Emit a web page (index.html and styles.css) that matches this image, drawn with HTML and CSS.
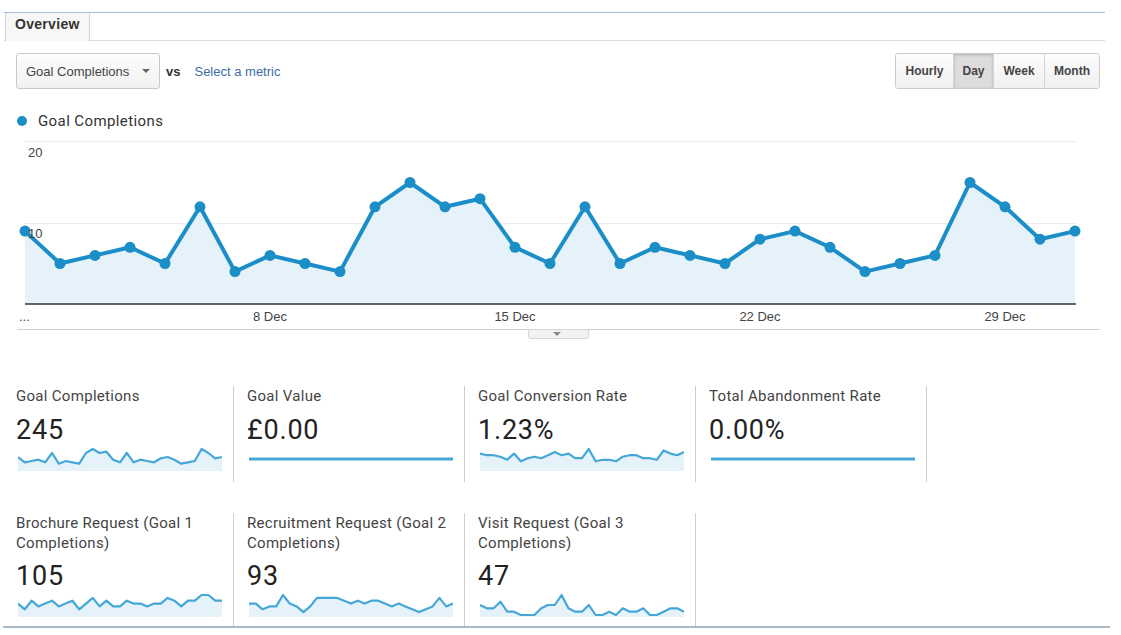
FILE: index.html
```html
<!DOCTYPE html>
<html lang="en">
<head>
    <meta charset="UTF-8">
    <meta name="viewport" content="width=device-width, initial-scale=1.0">
    <title>Goals Overview</title>
    <link rel="stylesheet" href="styles.css">
</head>
<body>
    <div class="tabs">
        <div class="tab">Overview</div>
    </div>

    <div class="toolbar">
        <div class="metric-select">Goal Completions<span class="caret"></span></div>
        <span class="vs">vs</span>
        <a class="select-metric">Select a metric</a>
        <div class="period-group">
            <button class="period hourly">Hourly</button>
            <button class="period day active">Day</button>
            <button class="period week">Week</button>
            <button class="period month">Month</button>
        </div>
    </div>

    <div class="legend"><span class="legend-dot"></span>Goal Completions</div>

    <svg id="main-chart" class="main-chart" width="1121" height="210" viewBox="0 134 1121 210">
        <line class="grid" x1="25" y1="141.5" x2="1076" y2="141.5"></line>
        <line class="grid" x1="25" y1="223.5" x2="1076" y2="223.5"></line>
        <g id="plot"></g>
        <line class="axis" x1="25" y1="304" x2="1076" y2="304"></line>
        <text class="tick" x="28" y="157">20</text>
        <text class="tick" x="28" y="238">10</text>
        <text class="tick" x="19" y="321">...</text>
        <text class="tick" x="270" y="321" text-anchor="middle">8 Dec</text>
        <text class="tick" x="515" y="321" text-anchor="middle">15 Dec</text>
        <text class="tick" x="760" y="321" text-anchor="middle">22 Dec</text>
        <text class="tick" x="1005" y="321" text-anchor="middle">29 Dec</text>
        <line class="divider" x1="17" y1="329.5" x2="1100" y2="329.5"></line>
        <rect class="pull" x="528.5" y="329.5" width="60" height="9" rx="2"></rect>
        <polygon class="pull-arrow" points="553,332 561,332 557,336"></polygon>
    </svg>

    <div class="cards">
        <div class="card">
            <div class="card-title">Goal Completions</div>
            <div class="card-value">245</div>
            <svg class="spark" width="204" height="24" data-values="9,5,6,7,5,12,4,6,5,4,12,15,12,13,7,5,12,5,7,6,5,8,9,7,4,5,6,15,12,8,9"></svg>
        </div>
        <div class="card">
            <div class="card-title">Goal Value</div>
            <div class="card-value">£0.00</div>
            <svg class="spark" width="204" height="24" data-values="0"></svg>
        </div>
        <div class="card">
            <div class="card-title">Goal Conversion Rate</div>
            <div class="card-value">1.23%</div>
            <svg class="spark" width="204" height="24" data-values="10,9,9,8,6,10,5,7,8,7,9,11,9,10,7,7,13,5,6,6,5,8,9,9,7,7,6,12,10,9,11"></svg>
        </div>
        <div class="card">
            <div class="card-title">Total Abandonment Rate</div>
            <div class="card-value">0.00%</div>
            <svg class="spark" width="204" height="24" data-values="0"></svg>
        </div>
    </div>

    <div class="cards cards-goals">
        <div class="card">
            <div class="card-title">Brochure Request (Goal 1 Completions)</div>
            <div class="card-value">105</div>
            <svg class="spark" width="204" height="24" data-values="4,2,5,3,4,5,3,4,5,2,4,6,3,5,3,3,5,4,4,3,4,4,6,5,3,5,5,7,7,5,5"></svg>
        </div>
        <div class="card">
            <div class="card-title">Recruitment Request (Goal 2 Completions)</div>
            <div class="card-value">93</div>
            <svg class="spark" width="204" height="24" data-values="4,4,2,3,3,7,4,3,1,3,6,6,6,6,5,4,5,4,5,5,4,3,4,3,2,1,2,3,6,3,4"></svg>
        </div>
        <div class="card">
            <div class="card-title">Visit Request (Goal 3 Completions)</div>
            <div class="card-value">47</div>
            <svg class="spark" width="204" height="24" data-values="3,2,2,4,1,1,0,0,0,2,3,3,6,2,1,1,3,0,0,1,0,2,1,1,2,0,0,1,2,2,1"></svg>
        </div>
    </div>

    <script>
        const SVG_NS = 'http://www.w3.org/2000/svg';

        // Daily goal completions, 1 - 31 Dec
        const dailyGoals = [9, 5, 6, 7, 5, 12, 4, 6, 5, 4, 12, 15, 12, 13, 7, 5, 12, 5, 7, 6, 5, 8, 9, 7, 4, 5, 6, 15, 12, 8, 9];

        function svgEl(tag, attrs) {
            const el = document.createElementNS(SVG_NS, tag);
            Object.keys(attrs).forEach(key => el.setAttribute(key, attrs[key]));
            return el;
        }

        function drawMainChart() {
            const plot = document.getElementById('plot');
            const left = 25, step = 35, base = 304, unit = 8.1;
            const pts = dailyGoals.map((v, i) => [left + i * step, base - v * unit]);
            const line = pts.map(p => p.join(',')).join(' ');
            const right = pts[pts.length - 1][0];

            plot.appendChild(svgEl('polygon', { points: `${left},${base} ${line} ${right},${base}`, class: 'area' }));
            plot.appendChild(svgEl('polyline', { points: line, class: 'line' }));
            pts.forEach(p => {
                plot.appendChild(svgEl('circle', { cx: p[0], cy: p[1], r: 5.5, class: 'dot' }));
            });
        }

        function drawSparks() {
            document.querySelectorAll('.spark').forEach(svg => {
                const values = svg.dataset.values.split(',').map(Number);
                const max = Math.max(...values);

                // flat series just gets a line through the middle
                if (max === 0) {
                    svg.appendChild(svgEl('line', { x1: 0, y1: 12, x2: 204, y2: 12, class: 'spark-line flat' }));
                    return;
                }

                const step = 204 / (values.length - 1);
                const pts = values.map((v, i) => [(i * step).toFixed(1), (22 - v / max * 20).toFixed(1)]);
                const line = pts.map(p => p.join(',')).join(' ');
                svg.appendChild(svgEl('polygon', { points: `0,24 ${line} 204,24`, class: 'spark-area' }));
                svg.appendChild(svgEl('polyline', { points: line, class: 'spark-line' }));
            });
        }

        drawMainChart();
        drawSparks();
    </script>
</body>
</html>
```

FILE: styles.css
```css
* {
    margin: 0;
    padding: 0;
    box-sizing: border-box;
}

body {
    width: 1121px;
    height: 635px;
    overflow: hidden;
    background: #fff;
    font-family: 'Liberation Sans', Arial, sans-serif;
    color: #333;
}

/* Tab strip */
.tabs {
    display: flex;
    height: 29px;
    margin: 12px 16px 0 4px;
    border-top: 1px solid #a9bdd2;
    border-bottom: 1px solid #dcdcdc;
}

.tab {
    align-self: flex-start;
    width: 85px;
    height: 28px;
    margin-left: 1px;
    margin-bottom: -1px;
    padding-left: 9px;
    border-left: 1px solid #d4d4d4;
    border-right: 1px solid #d4d4d4;
    background: #f7f7f7;
    font-size: 14px;
    font-weight: 700;
    letter-spacing: 0.3px;
    line-height: 22px;
    color: #333;
}

/* Metric picker + period buttons */
.toolbar {
    display: flex;
    align-items: center;
    height: 36px;
    margin: 12px 21px 0 16px;
    font-size: 13px;
}

.metric-select {
    display: flex;
    align-items: center;
    width: 144px;
    height: 36px;
    padding-left: 9px;
    border: 1px solid #c8c8c8;
    border-radius: 3px;
    background: linear-gradient(#fdfdfd, #f1f1f1);
    color: #444;
}

.caret {
    margin-left: auto;
    margin-right: 9px;
    border-left: 4px solid transparent;
    border-right: 4px solid transparent;
    border-top: 4px solid #666;
}

.vs {
    margin-left: 6px;
    font-weight: 700;
    color: #333;
}

.select-metric {
    margin-left: 14px;
    color: #3a6ea5;
    cursor: pointer;
}

.period-group {
    display: flex;
    margin-left: auto;
    border: 1px solid #cbcbcb;
    border-radius: 3px;
    overflow: hidden;
}

.period {
    height: 34px;
    border: 0;
    border-left: 1px solid #d4d4d4;
    background: linear-gradient(#fcfcfc, #f0f0f0);
    font-family: 'Liberation Sans', Arial, sans-serif;
    font-size: 12px;
    font-weight: 700;
    color: #444;
}

.period.hourly { width: 57px; border-left: 0; }
.period.day { width: 40px; }
.period.week { width: 51px; }
.period.month { width: 55px; }

.period.active {
    background: #dcdcdc;
    box-shadow: inset 0 1px 3px rgba(0, 0, 0, 0.2);
}

/* Legend + chart */
.legend {
    display: flex;
    align-items: center;
    height: 18px;
    margin: 23px 0 0 17px;
    font-family: Roboto, sans-serif;
    font-size: 15px;
    letter-spacing: 0.4px;
    color: #333;
}

.legend-dot {
    width: 10px;
    height: 10px;
    margin-right: 11px;
    border-radius: 50%;
    background: #1b8ec8;
}

.main-chart {
    display: block;
    margin-top: 4px;
}

.main-chart .grid {
    stroke: #ececec;
    stroke-width: 1;
}

.main-chart .axis {
    stroke: #333;
    stroke-width: 1.5;
}

.main-chart .area {
    fill: #e5f2f9;
}

.main-chart .line {
    fill: none;
    stroke: #1b8ec8;
    stroke-width: 4;
    stroke-linejoin: round;
}

.main-chart .dot {
    fill: #1b8ec8;
}

.main-chart .tick {
    font-family: 'Liberation Sans', Arial, sans-serif;
    font-size: 13px;
    fill: #444;
}

.main-chart .divider {
    stroke: #cfcfcf;
    stroke-width: 1;
}

.main-chart .pull {
    fill: #f2f2f2;
    stroke: #d6d6d6;
    stroke-width: 1;
}

.main-chart .pull-arrow {
    fill: #888;
}

/* Scorecards */
.cards {
    display: grid;
    grid-template-columns: repeat(4, 231px);
    margin: 42px 0 0 3px;
}

.card {
    height: 96px;
    padding: 1px 12px 0 13px;
    border-right: 1px solid #cfcfcf;
    font-family: Roboto, sans-serif;
}

.card-title {
    font-size: 15px;
    letter-spacing: 0.3px;
    line-height: 18px;
    color: #444;
}

.card-value {
    margin-top: 10px;
    font-size: 27px;
    letter-spacing: 0.8px;
    line-height: 30px;
    color: #222;
}

.spark {
    display: block;
    margin: 2px 0 0 2px;
}

.spark-area {
    fill: #e5f2f9;
}

.spark-line {
    fill: none;
    stroke: #45a7d8;
    stroke-width: 2.2;
    stroke-linejoin: round;
}

.spark-line.flat {
    stroke-width: 3;
}

.cards-goals {
    width: 1107px;
    margin-top: 31px;
    border-bottom: 2px solid #a9b8c6;
}

.cards-goals .card {
    height: 113px;
    padding-top: 0;
}

.cards-goals .card-title {
    line-height: 20px;
}

.cards-goals .card-value {
    margin-top: 8px;
}
```
